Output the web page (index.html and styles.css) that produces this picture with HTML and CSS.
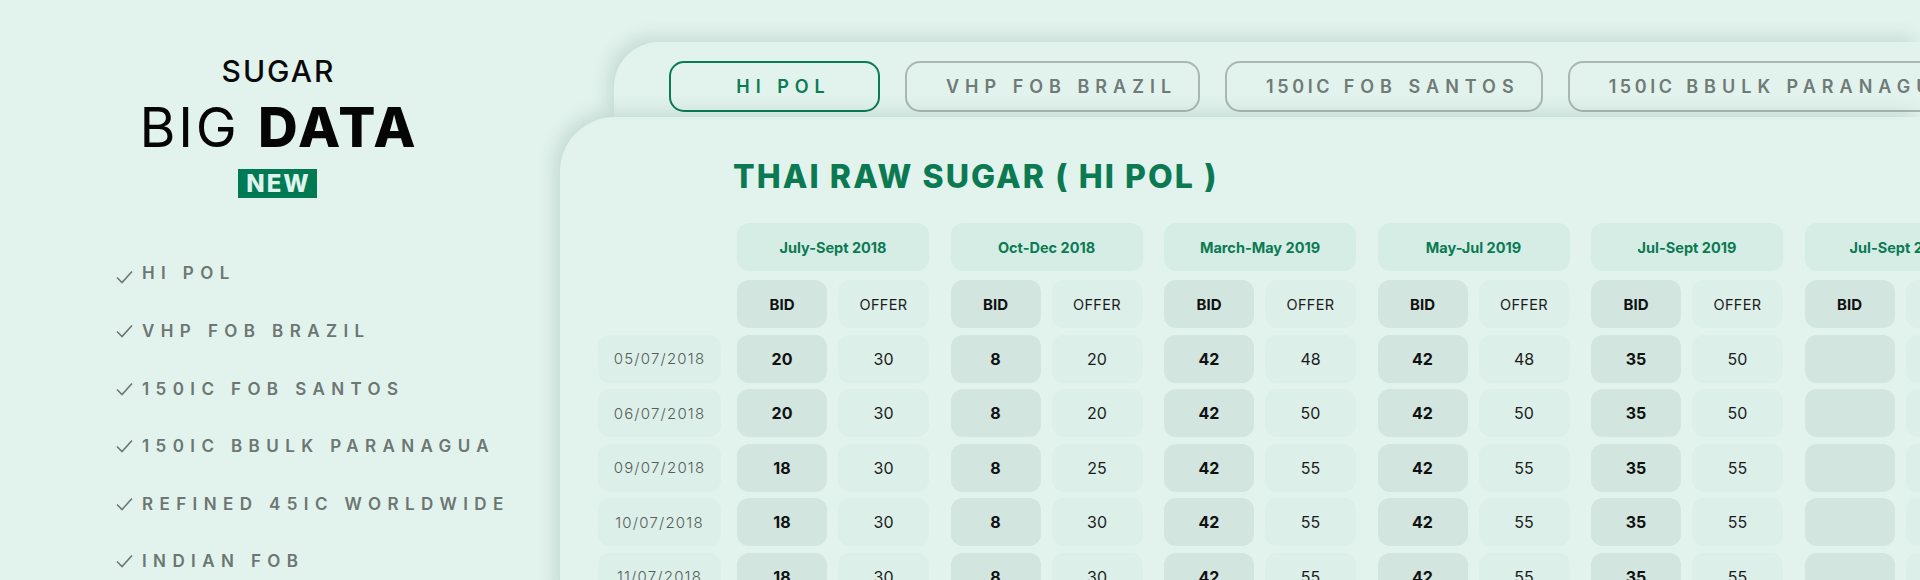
FILE: index.html
```html
<!DOCTYPE html>
<html lang="en">
<head>
<meta charset="utf-8">
<title>Sugar Big Data</title>
<link rel="stylesheet" href="styles.css">
</head>
<body>
<aside class="side">
  <div class="brand">
    <div class="brand-top">SUGAR</div>
    <div class="brand-main">BIG <b>DATA</b></div>
    <div class="badge">NEW</div>
  </div>
  <ul class="list">
    <li class="first"><svg class="check" viewBox="0 0 17 14" width="17" height="14"><polyline points="1,7.5 6,12.5 16,1.5"/></svg>HI POL</li>
    <li><svg class="check" viewBox="0 0 17 14" width="17" height="14"><polyline points="1,7.5 6,12.5 16,1.5"/></svg>VHP FOB BRAZIL</li>
    <li><svg class="check" viewBox="0 0 17 14" width="17" height="14"><polyline points="1,7.5 6,12.5 16,1.5"/></svg>150IC FOB SANTOS</li>
    <li><svg class="check" viewBox="0 0 17 14" width="17" height="14"><polyline points="1,7.5 6,12.5 16,1.5"/></svg>150IC BBULK PARANAGUA</li>
    <li><svg class="check" viewBox="0 0 17 14" width="17" height="14"><polyline points="1,7.5 6,12.5 16,1.5"/></svg>REFINED 45IC WORLDWIDE</li>
    <li><svg class="check" viewBox="0 0 17 14" width="17" height="14"><polyline points="1,7.5 6,12.5 16,1.5"/></svg>INDIAN FOB</li>
  </ul>
</aside>
<main class="stage">
  <nav class="tabs-card">
    <div class="tab active">HI POL</div>
    <div class="tab">VHP FOB BRAZIL</div>
    <div class="tab"><span class="num">150IC</span>&nbsp;FOB SANTOS</div>
    <div class="tab"><span class="num">150IC</span>&nbsp;BBULK PARANAGUA</div>
  </nav>
  <section class="main-card">
    <h1 class="title">THAI RAW SUGAR ( HI POL )</h1>
    <div class="table">
      <div class="row head-row">
        <div class="spacer"></div>
        <div class="groups">
          <div class="cell period">July-Sept 2018</div>
          <div class="cell period">Oct-Dec 2018</div>
          <div class="cell period">March-May 2019</div>
          <div class="cell period">May-Jul 2019</div>
          <div class="cell period">Jul-Sept 2019</div>
          <div class="cell period">Jul-Sept 2020</div>
        </div>
      </div>
      <div class="row">
        <div class="spacer"></div>
        <div class="groups">
          <div class="grp"><div class="cell bid hb">BID</div><div class="cell offer ho">OFFER</div></div>
          <div class="grp"><div class="cell bid hb">BID</div><div class="cell offer ho">OFFER</div></div>
          <div class="grp"><div class="cell bid hb">BID</div><div class="cell offer ho">OFFER</div></div>
          <div class="grp"><div class="cell bid hb">BID</div><div class="cell offer ho">OFFER</div></div>
          <div class="grp"><div class="cell bid hb">BID</div><div class="cell offer ho">OFFER</div></div>
          <div class="grp"><div class="cell bid hb">BID</div><div class="cell offer ho">OFFER</div></div>
        </div>
      </div>
      <div class="row">
        <div class="cell date">05/07/2018</div>
        <div class="groups">
          <div class="grp"><div class="cell bid">20</div><div class="cell offer">30</div></div>
          <div class="grp"><div class="cell bid">8</div><div class="cell offer">20</div></div>
          <div class="grp"><div class="cell bid">42</div><div class="cell offer">48</div></div>
          <div class="grp"><div class="cell bid">42</div><div class="cell offer">48</div></div>
          <div class="grp"><div class="cell bid">35</div><div class="cell offer">50</div></div>
          <div class="grp"><div class="cell bid"></div><div class="cell offer"></div></div>
        </div>
      </div>
      <div class="row">
        <div class="cell date">06/07/2018</div>
        <div class="groups">
          <div class="grp"><div class="cell bid">20</div><div class="cell offer">30</div></div>
          <div class="grp"><div class="cell bid">8</div><div class="cell offer">20</div></div>
          <div class="grp"><div class="cell bid">42</div><div class="cell offer">50</div></div>
          <div class="grp"><div class="cell bid">42</div><div class="cell offer">50</div></div>
          <div class="grp"><div class="cell bid">35</div><div class="cell offer">50</div></div>
          <div class="grp"><div class="cell bid"></div><div class="cell offer"></div></div>
        </div>
      </div>
      <div class="row">
        <div class="cell date">09/07/2018</div>
        <div class="groups">
          <div class="grp"><div class="cell bid">18</div><div class="cell offer">30</div></div>
          <div class="grp"><div class="cell bid">8</div><div class="cell offer">25</div></div>
          <div class="grp"><div class="cell bid">42</div><div class="cell offer">55</div></div>
          <div class="grp"><div class="cell bid">42</div><div class="cell offer">55</div></div>
          <div class="grp"><div class="cell bid">35</div><div class="cell offer">55</div></div>
          <div class="grp"><div class="cell bid"></div><div class="cell offer"></div></div>
        </div>
      </div>
      <div class="row">
        <div class="cell date">10/07/2018</div>
        <div class="groups">
          <div class="grp"><div class="cell bid">18</div><div class="cell offer">30</div></div>
          <div class="grp"><div class="cell bid">8</div><div class="cell offer">30</div></div>
          <div class="grp"><div class="cell bid">42</div><div class="cell offer">55</div></div>
          <div class="grp"><div class="cell bid">42</div><div class="cell offer">55</div></div>
          <div class="grp"><div class="cell bid">35</div><div class="cell offer">55</div></div>
          <div class="grp"><div class="cell bid"></div><div class="cell offer"></div></div>
        </div>
      </div>
      <div class="row">
        <div class="cell date">11/07/2018</div>
        <div class="groups">
          <div class="grp"><div class="cell bid">18</div><div class="cell offer">30</div></div>
          <div class="grp"><div class="cell bid">8</div><div class="cell offer">30</div></div>
          <div class="grp"><div class="cell bid">42</div><div class="cell offer">55</div></div>
          <div class="grp"><div class="cell bid">42</div><div class="cell offer">55</div></div>
          <div class="grp"><div class="cell bid">35</div><div class="cell offer">55</div></div>
          <div class="grp"><div class="cell bid"></div><div class="cell offer"></div></div>
        </div>
      </div>
    </div>
  </section>
</main>
</body>
</html>
```
FILE: styles.css
```css
* { box-sizing: border-box; margin: 0; padding: 0; }
html, body { width: 1920px; height: 580px; overflow: hidden; }
body {
  background: #e2f3ed;
  font-family: Inter, "Noto Sans", sans-serif;
  display: flex;
  color: #111;
}

/* left side */
.side { width: 560px; flex: none; display: flex; flex-direction: column; }
.brand {
  width: 555px;
  display: flex;
  flex-direction: column;
  align-items: center;
  padding-top: 56px;
}
.brand-top {
  font-size: 30px;
  line-height: 30px;
  font-weight: 500;
  letter-spacing: 2px;
  padding-left: 2px;
  color: #0a0a0a;
}
.brand-main {
  margin-top: 13.5px;
  font-size: 55px;
  line-height: 55px;
  font-weight: 400;
  letter-spacing: 2.8px;
  padding-left: 2.8px;
  color: #050505;
}
.brand-main b { font-weight: 800; }
.badge {
  margin-top: 14.5px;
  height: 29px;
  padding: 0 6px 0 8px;
  background: #007a52;
  color: #dff3ec;
  font-size: 24px;
  line-height: 29px;
  font-weight: 800;
  letter-spacing: 2px;
}
.list {
  list-style: none;
  margin-top: 64px;
  padding-left: 116px;
  display: flex;
  flex-direction: column;
  gap: 37.4px;
}
.list li {
  display: flex;
  align-items: center;
  gap: 9px;
  font-size: 17px;
  line-height: 20px;
  font-weight: 600;
  letter-spacing: 6.4px;
  color: #6c7672;
  white-space: nowrap;
}
.check { flex: none; fill: none; stroke: #6c7672; stroke-width: 1.6; }
.list li.first .check { margin-top: 8px; }

/* right stage */
.stage {
  flex: 1;
  min-width: 0;
  display: flex;
  flex-direction: column;
  padding-top: 42px;
}
.tabs-card {
  flex: none;
  margin-left: 54px;
  height: 75px;
  border-radius: 45px 0 0 0;
  background: #e2f3ed;
  box-shadow: -6px -5px 18px rgba(30, 80, 65, 0.14);
  display: flex;
  gap: 25px;
  padding: 19px 0 0 55px;
}
.tab {
  flex: none;
  height: 51px;
  border: 2px solid #aab7b2;
  border-radius: 15px;
  padding: 0 21px 0 39px;
  display: flex;
  align-items: center;
  justify-content: center;
  font-size: 18px;
  font-weight: 600;
  letter-spacing: 6px;
  color: #707a76;
  white-space: nowrap;
}
.tab .num { letter-spacing: 3.6px; }
.tab.active { border-color: #0b7a55; color: #0b7a55; min-width: 211px; }

.main-card {
  position: relative;
  z-index: 1;
  flex: 1;
  border-radius: 55px 0 0 0;
  background: #e2f3ed;
  box-shadow: -6px -5px 18px rgba(30, 80, 65, 0.14);
  padding: 40px 0 0 38px;
}
.title {
  margin-left: 135px;
  font-size: 32px;
  line-height: 40px;
  font-weight: 800;
  letter-spacing: 2.1px;
  color: #0b7a52;
  white-space: nowrap;
}

.table {
  margin-top: 26.4px;
  display: flex;
  flex-direction: column;
  gap: 6.5px;
}
.row { display: flex; gap: 16px; }
.head-row { margin-bottom: 2.5px; }
.spacer { width: 123px; flex: none; }
.groups { display: flex; gap: 21.5px; }
.grp { display: flex; gap: 11px; width: 192px; flex: none; }

.cell {
  flex: none;
  height: 48px;
  border-radius: 12px;
  display: flex;
  align-items: center;
  justify-content: center;
  white-space: nowrap;
}
.period {
  width: 192px;
  background: #d6ede6;
  font-size: 14.5px;
  font-weight: 700;
  color: #0b7a52;
}
.bid {
  width: 90px;
  background: #d2e5df;
  font-size: 16px;
  font-weight: 700;
  color: #111;
}
.offer {
  width: 91px;
  background: #dcefe9;
  font-size: 16px;
  font-weight: 400;
  color: #1c1c1c;
}
.hb { font-size: 15px; }
.ho { font-size: 14.5px; letter-spacing: 0.3px; }
.date {
  width: 123px;
  background: #dcefe9;
  font-size: 15px;
  font-weight: 300;
  letter-spacing: 1.2px;
  color: #565d5a;
}
```
